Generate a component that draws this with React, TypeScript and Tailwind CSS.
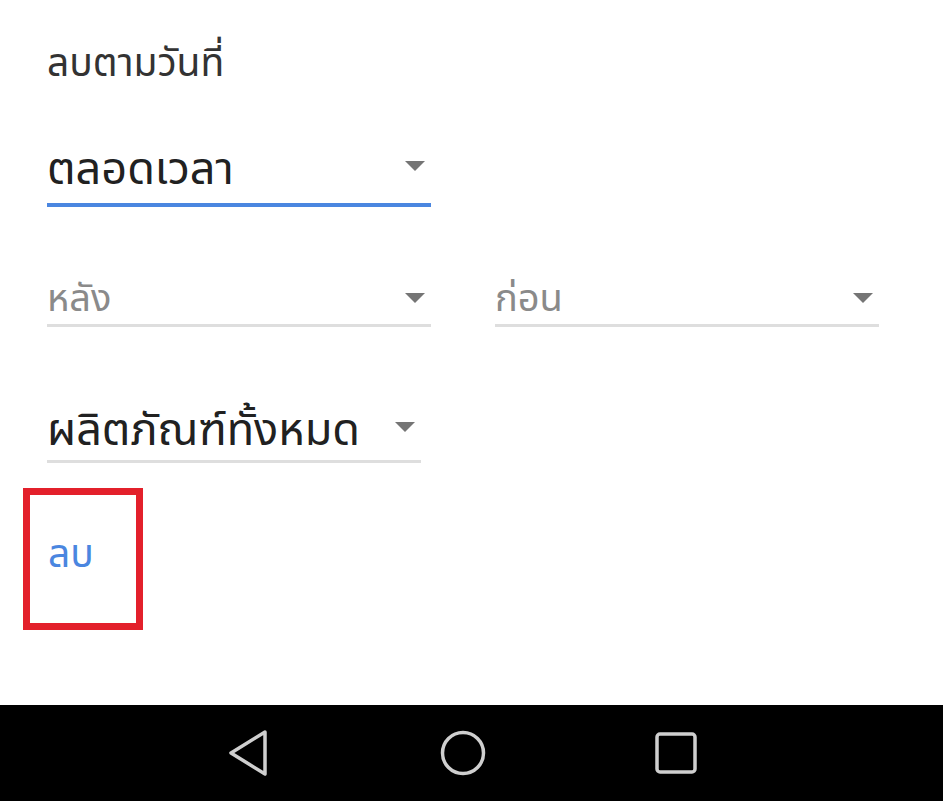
import React from 'react';

const font = { fontFamily: '"Noto Sans Thai", "Noto Sans", Roboto, sans-serif' };

function Caret({ className }: { className?: string }) {
  return (
    <svg width="20" height="10" viewBox="0 0 20 10" className={className}>
      <path d="M0 0 L20 0 L10 10 Z" fill="#757575" />
    </svg>
  );
}

interface SelectProps {
  label: string;
  width: string;
  muted?: boolean;
  active?: boolean;
  big?: boolean;
  lineGap: string;
  caretShift: string;
}

function Select({ label, width, muted, active, big, lineGap, caretShift }: SelectProps) {
  return (
    <div className={`${width} flex flex-col`}>
      <div className="flex items-center justify-between">
        <span
          className={`${big ? 'text-[45px]' : 'text-[38px]'} leading-none ${muted ? 'text-[#8a8a8a]' : 'text-[#212121]'}`}
        >
          {label}
        </span>
        <Caret className={`mr-[6px] ${caretShift}`} />
      </div>
      <div className={`${lineGap} ${active ? 'h-[4px] bg-[#4a86e0]' : 'h-[3px] bg-[#dedede]'}`} />
    </div>
  );
}

export default function App() {
  return (
    <div className="w-[943px] h-[801px] bg-white flex flex-col" style={font}>
      <div className="flex-1 flex flex-col pl-[47px]">
        <h2 className="mt-[45px] text-[39px] leading-none text-[#333]">ลบตามวันที่</h2>

        <div className="mt-[64px]">
          <Select label="ตลอดเวลา" width="w-[384px]" active big lineGap="mt-[10px]" caretShift="mb-[10px]" />
        </div>

        <div className="mt-[74px] flex gap-[64px]">
          <Select label="หลัง" width="w-[384px]" muted lineGap="mt-[5px]" caretShift="mb-[4px]" />
          <Select label="ก่อน" width="w-[384px]" muted lineGap="mt-[5px]" caretShift="mb-[4px]" />
        </div>

        <div className="mt-[82px]">
          <Select label="ผลิตภัณฑ์ทั้งหมด" width="w-[374px]" big lineGap="mt-[6px]" caretShift="mb-[10px]" />
        </div>

        <div className="mt-[25px] -ml-[24px] w-[120px] h-[142px] border-[7px] border-[#e3202b] flex items-center pl-[18px] pb-[8px]">
          <button className="text-[39px] leading-none text-[#4a86e0]">ลบ</button>
        </div>
      </div>

      <div className="h-[96px] bg-black flex items-center pl-[228px]">
        <svg width="40" height="48" viewBox="0 0 40 48">
          <path d="M37 3 L3 24 L37 45 Z" fill="none" stroke="#cfcfcf" strokeWidth="3.5" strokeLinejoin="round" />
        </svg>
        <svg width="48" height="48" viewBox="0 0 48 48" className="ml-[171px]">
          <circle cx="24" cy="24" r="20.5" fill="none" stroke="#cfcfcf" strokeWidth="3.5" />
        </svg>
        <svg width="44" height="44" viewBox="0 0 44 44" className="ml-[167px]">
          <rect x="3" y="3" width="38" height="38" rx="3" fill="none" stroke="#cfcfcf" strokeWidth="3.5" />
        </svg>
      </div>
    </div>
  );
}
